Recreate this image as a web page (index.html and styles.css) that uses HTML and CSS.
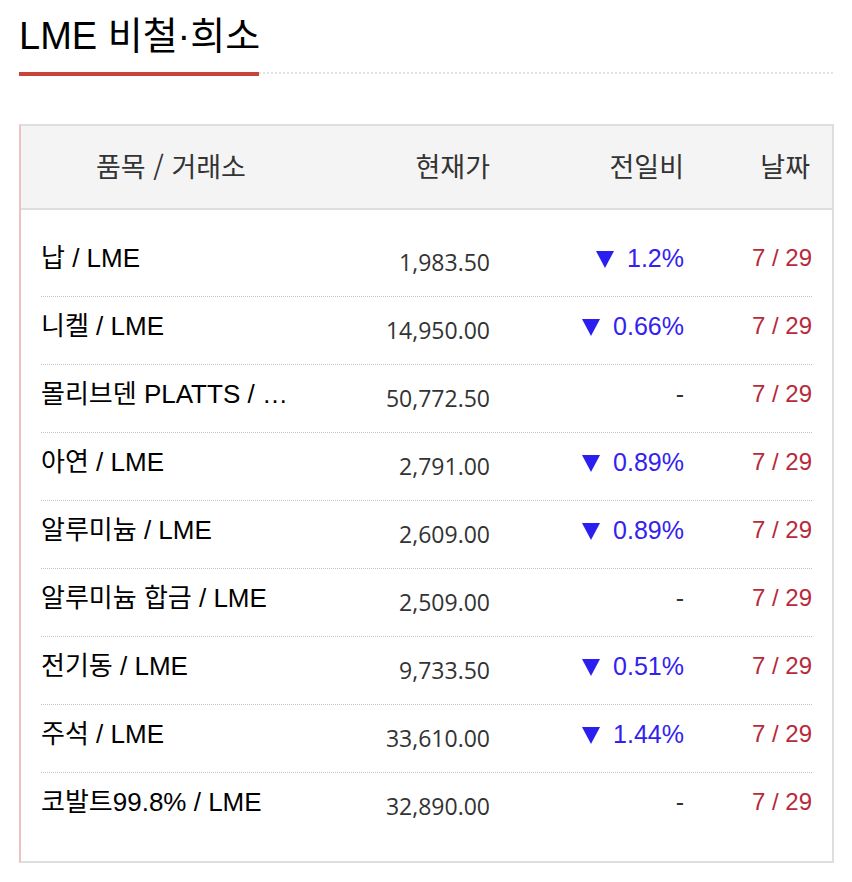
FILE: index.html
```html
<!DOCTYPE html>
<html lang="ko">
<head>
<meta charset="utf-8">
<title>LME 비철·희소</title>
<link rel="stylesheet" href="styles.css">
</head>
<body>
<div class="page">
  <h2 class="title">LME 비철·희소</h2>
  <div class="title-rule"><span class="title-bar"></span></div>
  <div class="board">
    <div class="head">
      <div class="h-name">품목 / 거래소</div>
      <div class="h-right">현재가</div>
      <div class="h-right">전일비</div>
      <div class="h-right h-date">날짜</div>
    </div>
    <div class="body">
      <div class="row">
        <div class="name">납 / LME</div>
        <div class="price">1,983.50</div>
        <div class="chg down"><span class="tri"></span>1.2%</div>
        <div class="date">7 / 29</div>
      </div>
      <div class="row">
        <div class="name">니켈 / LME</div>
        <div class="price">14,950.00</div>
        <div class="chg down"><span class="tri"></span>0.66%</div>
        <div class="date">7 / 29</div>
      </div>
      <div class="row">
        <div class="name">몰리브덴 PLATTS / LME</div>
        <div class="price">50,772.50</div>
        <div class="chg flat">-</div>
        <div class="date">7 / 29</div>
      </div>
      <div class="row">
        <div class="name">아연 / LME</div>
        <div class="price">2,791.00</div>
        <div class="chg down"><span class="tri"></span>0.89%</div>
        <div class="date">7 / 29</div>
      </div>
      <div class="row">
        <div class="name">알루미늄 / LME</div>
        <div class="price">2,609.00</div>
        <div class="chg down"><span class="tri"></span>0.89%</div>
        <div class="date">7 / 29</div>
      </div>
      <div class="row">
        <div class="name">알루미늄 합금 / LME</div>
        <div class="price">2,509.00</div>
        <div class="chg flat">-</div>
        <div class="date">7 / 29</div>
      </div>
      <div class="row">
        <div class="name">전기동 / LME</div>
        <div class="price">9,733.50</div>
        <div class="chg down"><span class="tri"></span>0.51%</div>
        <div class="date">7 / 29</div>
      </div>
      <div class="row">
        <div class="name">주석 / LME</div>
        <div class="price">33,610.00</div>
        <div class="chg down"><span class="tri"></span>1.44%</div>
        <div class="date">7 / 29</div>
      </div>
      <div class="row">
        <div class="name">코발트99.8% / LME</div>
        <div class="price">32,890.00</div>
        <div class="chg flat">-</div>
        <div class="date">7 / 29</div>
      </div>
    </div>
  </div>
</div>
</body>
</html>
```

FILE: styles.css
```css
html, body {
  margin: 0;
  padding: 0;
  background: #fff;
}

.page {
  width: 815px;
  padding-left: 19px;
  font-family: "Liberation Sans", "Noto Sans CJK KR", sans-serif;
  color: #000;
}

.title {
  margin: 0;
  padding-top: 14px;
  font-size: 38px;
  line-height: 44px;
  font-weight: 400;
  color: #000;
}

.title-rule {
  margin-top: 14px;
  height: 4px;
  display: flex;
  background-image: linear-gradient(to right, #e2e2ea 2px, transparent 2px);
  background-size: 4px 2px;
  background-repeat: repeat-x;
  background-position: 0 0;
}

.title-bar {
  display: block;
  width: 240px;
  height: 4px;
  background: #c9433b;
}

.board {
  margin-top: 48px;
  box-sizing: border-box;
  width: 815px;
  border: 2px solid #dedede;
  border-left-color: #efc2c2;
}

.head,
.row {
  display: grid;
  grid-template-columns: 260px 189px 194px 128px;
}

.head {
  height: 84px;
  box-sizing: border-box;
  padding: 0 20px 4px;
  align-items: center;
  background: #f4f4f4;
  border-bottom: 2px solid #dedede;
  font-family: "Noto Sans CJK KR", sans-serif;
  font-size: 27px;
  color: #333;
}

.h-name {
  text-align: center;
}

.h-right {
  text-align: right;
}

.h-date {
  padding-right: 2px;
}

.body {
  padding: 19px 20px 20px;
}

.row {
  height: 68px;
  box-sizing: border-box;
  padding-top: 15px;
  line-height: 28px;
  font-size: 26px;
  align-items: start;
  border-bottom: 1px dotted #c4c4c4;
}

.row:last-child {
  border-bottom: 0;
}

.name {
  white-space: nowrap;
  overflow: hidden;
  text-overflow: ellipsis;
  padding-right: 4px;
  color: #000;
}

.price {
  text-align: right;
  font-family: "Open Sans", sans-serif;
  font-size: 23px;
  color: #333;
  padding-top: 4px;
}

.chg {
  text-align: right;
  font-size: 25px;
}

.chg.down {
  color: #3322ee;
}

.chg.flat {
  color: #333;
}

.tri {
  display: inline-block;
  width: 0;
  height: 0;
  border-left: 9px solid transparent;
  border-right: 9px solid transparent;
  border-top: 17px solid #2b1ff0;
  margin-right: 13px;
  vertical-align: -1px;
}

.date {
  text-align: right;
  font-size: 24px;
  color: #b82a3a;
}
```
